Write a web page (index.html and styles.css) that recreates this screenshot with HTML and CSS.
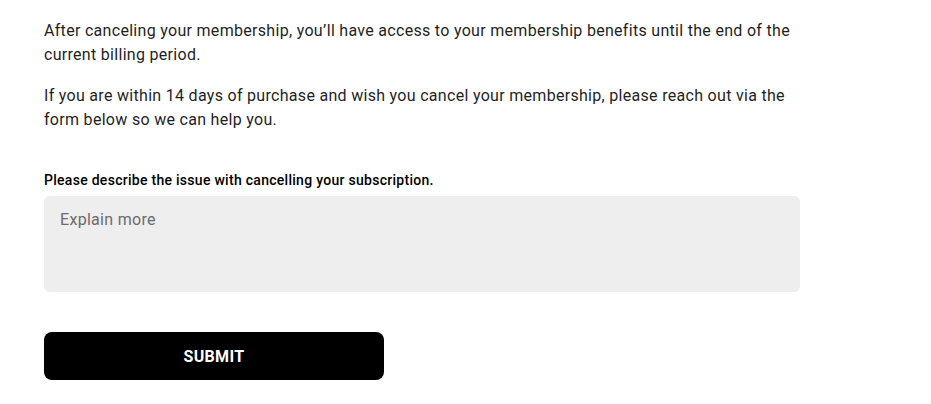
FILE: index.html
```html
<!DOCTYPE html>
<html lang="en">
<head>
<meta charset="utf-8">
<title>Cancel membership</title>
<link rel="stylesheet" href="styles.css">
</head>
<body>
<main class="page">
  <p class="text">After canceling your membership, you’ll have access to your membership benefits until the end of the current billing period.</p>
  <p class="text">If you are within 14 days of purchase and wish you cancel your membership, please reach out via the form below so we can help you.</p>
  <form class="form">
    <label class="label" for="issue">Please describe the issue with cancelling your subscription.</label>
    <textarea id="issue" class="area" placeholder="Explain more"></textarea>
    <button type="button" class="submit">SUBMIT</button>
  </form>
</main>
</body>
</html>
```

FILE: styles.css
```css
html, body {
  margin: 0;
  padding: 0;
  background: #ffffff;
}
.page {
  width: 756px;
  padding: 19px 0 0 44px;
  display: flex;
  flex-direction: column;
  gap: 17px;
  font-family: Roboto, "Liberation Sans", sans-serif;
  color: #1f1f1f;
}
.text {
  margin: 0;
  font-size: 16px;
  line-height: 24px;
  letter-spacing: 0.3px;
}
.form {
  display: flex;
  flex-direction: column;
  margin-top: 21px;
}
.label {
  font-size: 14px;
  line-height: 20px;
  font-weight: 500;
  letter-spacing: 0.28px;
  color: #000;
}
.area {
  margin-top: 6px;
  height: 96px;
  box-sizing: border-box;
  border: none;
  border-radius: 6px;
  background: #eeeeee;
  padding: 12px 16px;
  font-family: Roboto, "Liberation Sans", sans-serif;
  font-size: 16px;
  line-height: 24px;
  letter-spacing: 0.3px;
  resize: none;
  outline: none;
}
.area::placeholder {
  color: #6b6b6b;
}
.submit {
  margin-top: 40px;
  width: 340px;
  height: 48px;
  border: none;
  border-radius: 8px;
  background: #000;
  color: #fff;
  font-family: Roboto, "Liberation Sans", sans-serif;
  font-size: 16px;
  font-weight: 700;
  letter-spacing: 0.3px;
  cursor: pointer;
}
```
